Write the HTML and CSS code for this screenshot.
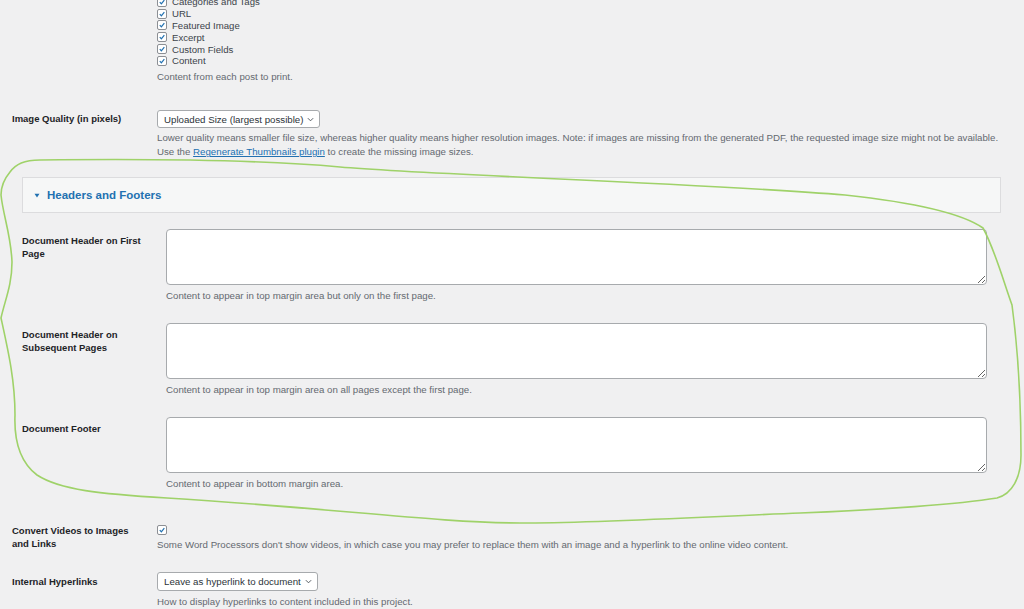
FILE: index.html
```html
<!DOCTYPE html>
<html lang="en">
<head>
    <meta charset="UTF-8">
    <meta name="viewport" content="width=device-width, initial-scale=1.0">
    <title>Export Settings</title>
    <link rel="stylesheet" href="styles.css">
</head>
<body>
    <div class="page">
        <div class="row">
            <div class="label"></div>
            <div class="field">
                <ul class="checks">
                    <li><span class="cb"><svg viewBox="0 0 10 10"><path d="M2.2 5.2 L4.2 7.2 L7.9 2.6"/></svg></span>Categories and Tags</li>
                    <li><span class="cb"><svg viewBox="0 0 10 10"><path d="M2.2 5.2 L4.2 7.2 L7.9 2.6"/></svg></span>URL</li>
                    <li><span class="cb"><svg viewBox="0 0 10 10"><path d="M2.2 5.2 L4.2 7.2 L7.9 2.6"/></svg></span>Featured Image</li>
                    <li><span class="cb"><svg viewBox="0 0 10 10"><path d="M2.2 5.2 L4.2 7.2 L7.9 2.6"/></svg></span>Excerpt</li>
                    <li><span class="cb"><svg viewBox="0 0 10 10"><path d="M2.2 5.2 L4.2 7.2 L7.9 2.6"/></svg></span>Custom Fields</li>
                    <li><span class="cb"><svg viewBox="0 0 10 10"><path d="M2.2 5.2 L4.2 7.2 L7.9 2.6"/></svg></span>Content</li>
                </ul>
                <p class="desc desc-checks">Content from each post to print.</p>
            </div>
        </div>

        <div class="row row-quality">
            <div class="label">Image Quality (in pixels)</div>
            <div class="field">
                <div class="select">Uploaded Size (largest possible)<svg viewBox="0 0 8 5"><path d="M1 1 L4 4 L7 1"/></svg></div>
                <p class="desc">Lower quality means smaller file size, whereas higher quality means higher resolution images. Note: if images are missing from the generated PDF, the requested image size might not be available.<br>Use the <a href="#">Regenerate Thumbnails plugin</a> to create the missing image sizes.</p>
            </div>
        </div>

        <div class="group">
            <div class="group-head"><svg viewBox="0 0 6 5"><path d="M0.5 0.8 L5.5 0.8 L3 4.4 Z"/></svg>Headers and Footers</div>

            <div class="row group-row">
                <div class="label">Document Header on First Page</div>
                <div class="field">
                    <textarea></textarea>
                    <p class="desc">Content to appear in top margin area but only on the first page.</p>
                </div>
            </div>
            <div class="row group-row">
                <div class="label">Document Header on Subsequent Pages</div>
                <div class="field">
                    <textarea></textarea>
                    <p class="desc">Content to appear in top margin area on all pages except the first page.</p>
                </div>
            </div>
            <div class="row group-row">
                <div class="label">Document Footer</div>
                <div class="field">
                    <textarea></textarea>
                    <p class="desc">Content to appear in bottom margin area.</p>
                </div>
            </div>
        </div>

        <div class="row row-videos">
            <div class="label">Convert Videos to Images and Links</div>
            <div class="field">
                <span class="cb"><svg viewBox="0 0 10 10"><path d="M2.2 5.2 L4.2 7.2 L7.9 2.6"/></svg></span>
                <p class="desc">Some Word Processors don't show videos, in which case you may prefer to replace them with an image and a hyperlink to the online video content.</p>
            </div>
        </div>

        <div class="row row-links">
            <div class="label">Internal Hyperlinks</div>
            <div class="field">
                <div class="select">Leave as hyperlink to document<svg viewBox="0 0 8 5"><path d="M1 1 L4 4 L7 1"/></svg></div>
                <p class="desc">How to display hyperlinks to content included in this project.</p>
            </div>
        </div>
    </div>

    <!-- hand-drawn highlight round the headers and footers block -->
    <svg class="scribble" viewBox="0 0 1024 609">
        <path d="M10 172 C16 164, 24 160, 40 160 C120 159, 250 159, 340 167 C430 175, 700 183, 845 195 C910 202, 960 212, 983 228 C995 250, 1003 280, 1012 305 C1018 350, 1021 410, 1021 455 C1021 478, 1012 494, 997 498 C960 504, 880 510, 800 513 C720 516, 600 523, 520 523 C440 523, 330 508, 167 498 C100 494, 60 490, 37 475 C20 462, 14 440, 15 415 C15 380, 8 350, 1 318 C5 300, 12 285, 12 262 C11 235, 3 215, 1 195 C1 185, 5 178, 10 172"/>
    </svg>
</body>
</html>
```

FILE: styles.css
```css
html, body {
    margin: 0;
    overflow: hidden;
}
body {
    background: #f0f0f1;
    font-family: "Liberation Sans", Arial, sans-serif;
    color: #1d2327;
}
.page {
    margin-top: -4px;
    padding: 0 12px;
}
.row {
    display: flex;
}
.label {
    width: 145px;
    flex: none;
    box-sizing: border-box;
    padding-right: 20px;
    font-size: 9.5px;
    font-weight: bold;
    line-height: 13px;
}
.field {
    flex: 1;
    min-width: 0;
}
.checks {
    list-style: none;
    margin: 0;
    padding: 0;
}
.checks li {
    display: flex;
    align-items: center;
    gap: 5px;
    height: 11.8px;
    font-size: 9.6px;
    color: #3c434a;
}
.cb {
    display: block;
    width: 10px;
    height: 10px;
    box-sizing: border-box;
    border: 1px solid #8c8f94;
    border-radius: 2px;
    background: #fff;
    flex: none;
}
.cb svg {
    display: block;
    width: 8px;
    height: 8px;
}
.cb path {
    fill: none;
    stroke: #2271b1;
    stroke-width: 1.5;
}
.desc {
    margin: 3px 0 0;
    font-size: 9.7px;
    line-height: 14px;
    color: #646970;
    white-space: nowrap;
}
.desc a {
    color: #2271b1;
}
.desc-checks {
    margin-top: 3px;
}
.select {
    display: inline-flex;
    align-items: center;
    gap: 4px;
    height: 18px;
    box-sizing: border-box;
    padding: 0 5px 0 6px;
    border: 1px solid #a7aaad;
    border-radius: 3px;
    background: #fff;
    font-size: 9.7px;
    color: #2c3338;
}
.select svg {
    width: 7px;
    height: 5px;
}
.select path {
    fill: none;
    stroke: #50575e;
    stroke-width: 1.1;
}
.row-quality {
    margin-top: 25px;
}
.row-quality .label {
    padding-top: 3.5px;
}
.group {
    margin-top: 18px;
    padding-left: 10px;
}
.group-head {
    display: flex;
    align-items: center;
    gap: 7px;
    width: 979px;
    height: 36px;
    box-sizing: border-box;
    padding-left: 11px;
    background: #f6f7f7;
    border: 1px solid #dcdcde;
    font-size: 11.5px;
    font-weight: bold;
    color: #2271b1;
}
.group-head svg {
    width: 6px;
    height: 5px;
}
.group-head path {
    fill: #2271b1;
}
.group-row {
    margin-top: 20px;
}
.group-head + .group-row {
    margin-top: 16px;
}
.group-row .label {
    width: 144px;
    padding-top: 5px;
}
textarea {
    display: block;
    width: 821px;
    height: 56px;
    box-sizing: border-box;
    margin: 0;
    border: 1px solid #a7aaad;
    border-radius: 4px;
    background: #fff;
}
.group-row .desc {
    margin-top: 4px;
}
.row-videos {
    margin-top: 34px;
}
.row-videos .label {
    margin-top: -1px;
}
.row-links {
    margin-top: 19px;
}
.row-links .label {
    padding-top: 4px;
}
.row-links .select {
    height: 19px;
}
.row-links .desc {
    margin-top: 4px;
}
.scribble {
    position: absolute;
    top: 0;
    left: 0;
    width: 1024px;
    height: 609px;
    pointer-events: none;
}
.scribble path {
    fill: none;
    stroke: #9fd269;
    stroke-width: 1.6;
    stroke-linecap: round;
}
```
